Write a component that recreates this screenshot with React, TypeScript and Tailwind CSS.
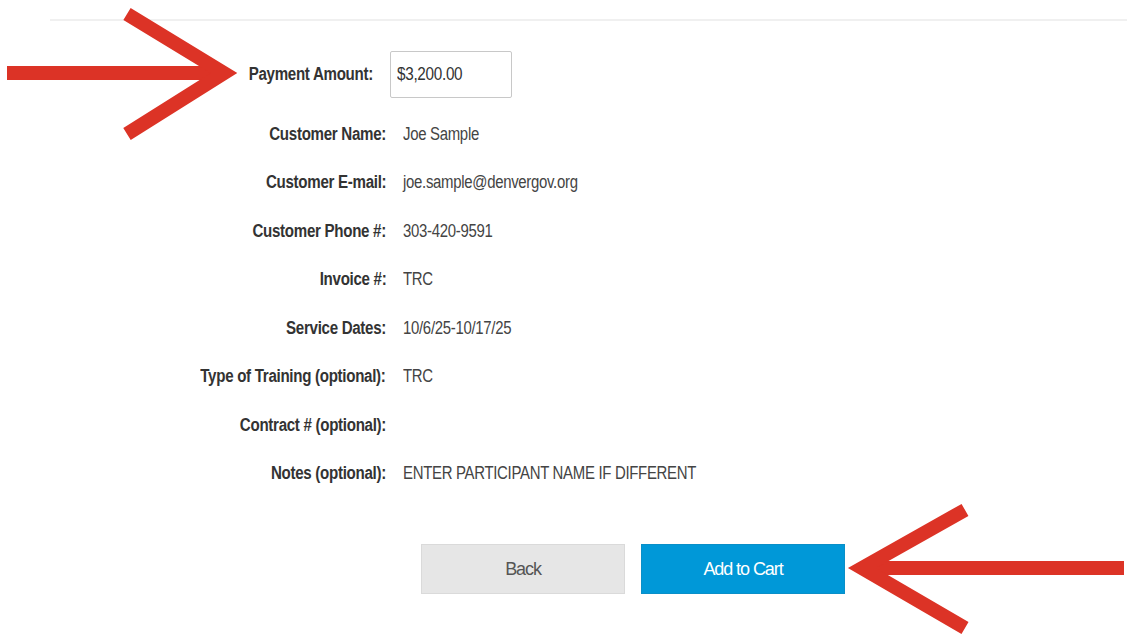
import React from "react";

const rows: { label: string; value: string }[] = [
  { label: "Customer Name:", value: "Joe Sample" },
  { label: "Customer E-mail:", value: "joe.sample@denvergov.org" },
  { label: "Customer Phone #:", value: "303-420-9591" },
  { label: "Invoice #:", value: "TRC" },
  { label: "Service Dates:", value: "10/6/25-10/17/25" },
  { label: "Type of Training (optional):", value: "TRC" },
  { label: "Contract # (optional):", value: "" },
  { label: "Notes (optional):", value: "ENTER PARTICIPANT NAME IF DIFFERENT" },
];

function Arrows() {
  return (
    <svg
      className="absolute inset-0 pointer-events-none"
      width={1127}
      height={635}
      viewBox="0 0 1127 635"
    >
      <g stroke="#dc3326" strokeWidth={14} fill="none" strokeLinejoin="miter" strokeMiterlimit={10}>
        <line x1={7} y1={73} x2={222} y2={73} />
        <polyline points="127,14 224,73 127,134" />
        <line x1={866} y1={568} x2={1124} y2={568} />
        <polyline points="965,510 862,568 965,628" />
      </g>
    </svg>
  );
}

export default function App() {
  return (
    <div
      className="relative w-[1127px] h-[635px] bg-white overflow-hidden text-[18px] tracking-[-0.02em]"
      style={{ fontFamily: '"Liberation Sans", Arial, sans-serif' }}
    >
      <div className="ml-[50px] mt-[19px] h-[2px] bg-[#f0f0f0]" />

      <div className="mt-[30px] flex flex-col">
        <div className="flex items-center h-[47px]">
          <div className="w-[390px] pr-[17px] text-right font-bold text-[#333] whitespace-nowrap">
            <span className="inline-block scale-x-[0.84] origin-right">Payment Amount:</span>
          </div>
          <div className="w-[122px] h-[47px] border border-[#c8c8c8] rounded-[2px] flex items-center px-[6px] text-[#333] whitespace-nowrap">
            <span className="inline-block scale-x-[0.85] origin-left">$3,200.00</span>
          </div>
        </div>

        <div className="mt-[12px] flex flex-col">
          {rows.map((r) => (
            <div key={r.label} className="flex items-center h-[48.5px] whitespace-nowrap">
              <div className="w-[386px] text-right font-bold text-[#333]">
                <span className="inline-block scale-x-[0.84] origin-right">{r.label}</span>
              </div>
              <div className="ml-[17px] text-[#444]">
                <span className="inline-block scale-x-[0.83] origin-left">{r.value}</span>
              </div>
            </div>
          ))}
        </div>

        <div className="mt-[46px] flex gap-[16px] ml-[421px] tracking-[-0.06em]">
          <button className="w-[204px] h-[50px] bg-[#e6e6e6] border border-[#dadada] text-[#555]">Back</button>
          <button className="w-[204px] h-[50px] bg-[#0098d8] border border-[#0a8fc8] text-white">Add to Cart</button>
        </div>
      </div>

      <Arrows />
    </div>
  );
}
